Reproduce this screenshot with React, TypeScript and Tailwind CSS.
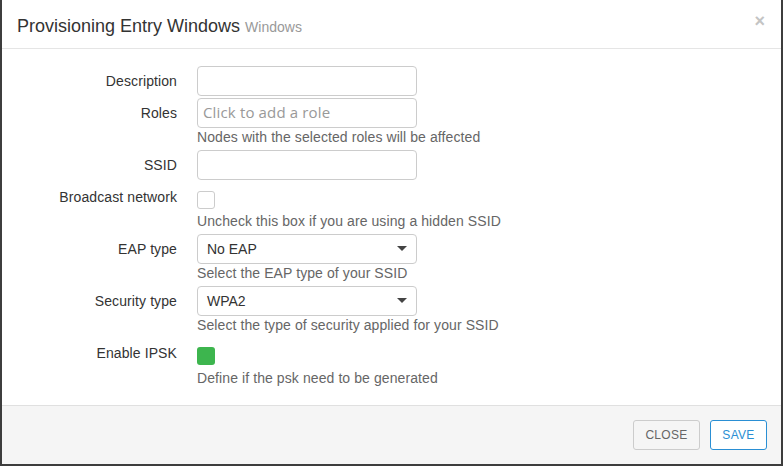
import React from "react";

const Caret = () => (
  <svg width="10" height="6" viewBox="0 0 10 6" className="shrink-0">
    <path d="M0 0 L10 0 L5 5 Z" fill="#444" />
  </svg>
);

function InputRow({ label, children, first }: { label: string; children: React.ReactNode; first?: string }) {
  return (
    <div className={`flex ${first ?? ""}`}>
      <div className="w-[175px] text-right h-[30px] leading-[30px] text-[14px] text-[#333] tracking-[0.1px]">{label}</div>
      <div className="ml-[20px] w-[220px]">{children}</div>
    </div>
  );
}

const Help = ({ children, cls }: { children: React.ReactNode; cls?: string }) => (
  <div className={`text-[14px] leading-[18px] text-[#666] whitespace-nowrap tracking-[0.09px] ${cls ?? ""}`}>{children}</div>
);

const TextBox = ({ placeholder }: { placeholder?: string }) => (
  <div className="h-[30px] w-[220px] border border-[#ccc] rounded-[4px] bg-white px-[5px] flex items-center">
    {placeholder && (
      <span className="text-[15px] text-[#999] tracking-[0.15px] -mt-[1px]" style={{ fontFamily: '"Open Sans", sans-serif' }}>
        {placeholder}
      </span>
    )}
  </div>
);

const SelectBox = ({ value }: { value: string }) => (
  <div className="h-[30px] w-[220px] border border-[#ccc] rounded-[4px] bg-white pl-[9px] pr-[9px] flex items-center justify-between">
    <span className="text-[14px] text-[#333]">{value}</span>
    <Caret />
  </div>
);

export default function App() {
  return (
    <div
      className="w-[783px] h-[466px] bg-[#3d3d3d] pl-[2px] pr-[2px] overflow-hidden"
      style={{ fontFamily: '"Liberation Sans", Arial, sans-serif' }}
    >
      <div className="w-[779px] h-[464px] bg-white flex flex-col">
        {/* header */}
        <div className="h-[49px] border-b border-[#e5e5e5] flex items-center justify-between pl-[15px] pr-[16px] shrink-0">
          <div className="flex items-baseline pt-[4px]">
            <span className="text-[18px] text-[#333]">Provisioning Entry Windows</span>
            <span className="ml-[5px] text-[14px] text-[#999]">Windows</span>
          </div>
          <span className="text-[18px] font-bold text-[#c4c4c4] leading-none mb-[7px]">×</span>
        </div>

        {/* body */}
        <div className="flex-1 pt-[17px]">
          <InputRow label="Description">
            <TextBox />
          </InputRow>
          <InputRow label="Roles" first="mt-[2px]">
            <TextBox placeholder="Click to add a role" />
            <Help>Nodes with the selected roles will be affected</Help>
          </InputRow>
          <InputRow label="SSID" first="mt-[4px]">
            <TextBox />
          </InputRow>

          <div className="flex mt-[11px]">
            <div className="w-[175px] text-right leading-[18px] text-[14px] text-[#333] tracking-[0.1px] -mt-[3px]">Broadcast network</div>
            <div className="ml-[20px] w-[220px]">
              <div className="w-[18px] h-[18px] border border-[#ccc] rounded-[3px] bg-white" />
              <Help cls="mt-[3px]">Uncheck this box if you are using a hidden SSID</Help>
            </div>
          </div>

          <InputRow label="EAP type" first="mt-[4px]">
            <SelectBox value="No EAP" />
            <Help>Select the EAP type of your SSID</Help>
          </InputRow>
          <InputRow label="Security type" first="mt-[4px]">
            <SelectBox value="WPA2" />
            <Help>Select the type of security applied for your SSID</Help>
          </InputRow>

          <div className="flex mt-[13px]">
            <div className="w-[175px] text-right leading-[18px] text-[14px] text-[#333] tracking-[0.1px] -mt-[3px]">Enable IPSK</div>
            <div className="ml-[20px] w-[220px]">
              <div className="w-[18px] h-[18px] rounded-[3px] bg-[#3db54e]" />
              <Help cls="mt-[4px]">Define if the psk need to be generated</Help>
            </div>
          </div>
        </div>

        {/* footer */}
        <div className="h-[59px] border-t border-[#e0e0e0] bg-[#f5f5f5] flex items-center justify-end pr-[14px] gap-[10px] shrink-0">
          <button className="h-[30px] w-[67px] border border-[#ccc] rounded-[3px] bg-[#f5f5f5] text-[12px] text-[#666] tracking-[0.3px]">
            CLOSE
          </button>
          <button className="h-[30px] w-[57px] border border-[#2a8fd4] rounded-[3px] bg-white text-[12px] text-[#2a8fd4] tracking-[0.3px]">
            SAVE
          </button>
        </div>
      </div>
    </div>
  );
}
